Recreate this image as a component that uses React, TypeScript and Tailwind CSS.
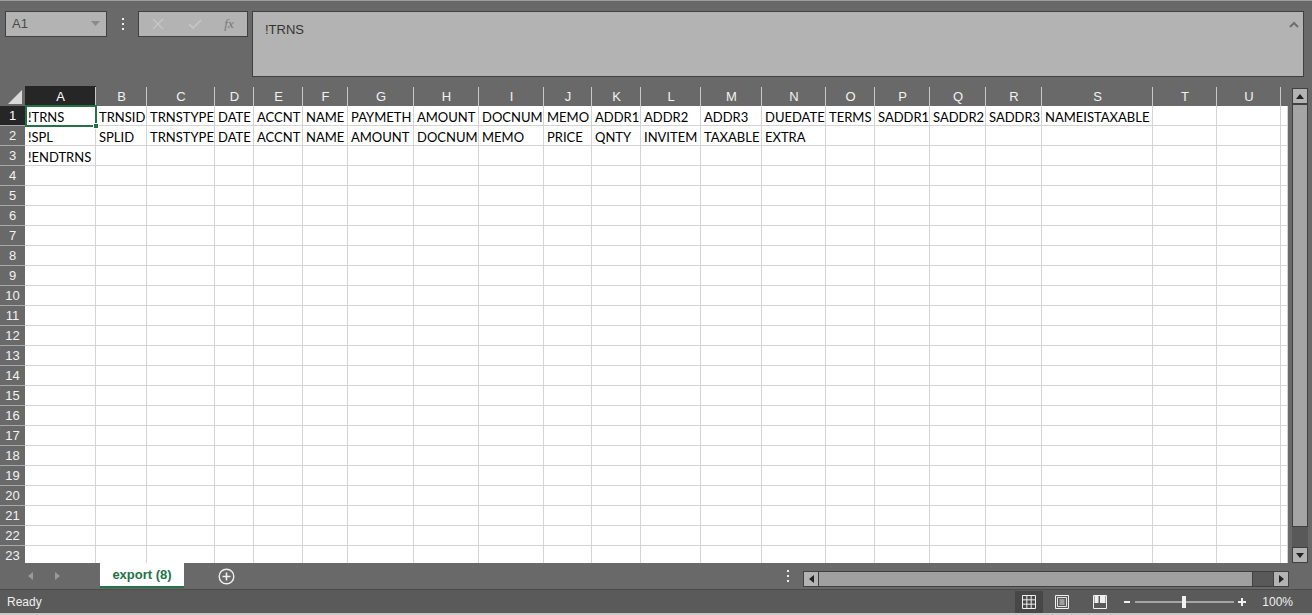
import React from 'react';

const COLS: [string, number][] = [
  ['A', 71], ['B', 51], ['C', 68], ['D', 39], ['E', 49], ['F', 45], ['G', 66],
  ['H', 65], ['I', 65], ['J', 48], ['K', 49], ['L', 60], ['M', 61], ['N', 64],
  ['O', 49], ['P', 55], ['Q', 56], ['R', 56], ['S', 111], ['T', 64], ['U', 64], ['', 7],
];

const DATA: string[][] = [
  ['!TRNS', 'TRNSID', 'TRNSTYPE', 'DATE', 'ACCNT', 'NAME', 'PAYMETH', 'AMOUNT', 'DOCNUM', 'MEMO', 'ADDR1', 'ADDR2', 'ADDR3', 'DUEDATE', 'TERMS', 'SADDR1', 'SADDR2', 'SADDR3', 'NAMEISTAXABLE'],
  ['!SPL', 'SPLID', 'TRNSTYPE', 'DATE', 'ACCNT', 'NAME', 'AMOUNT', 'DOCNUM', 'MEMO', 'PRICE', 'QNTY', 'INVITEM', 'TAXABLE', 'EXTRA'],
  ['!ENDTRNS'],
];

const ROWS = Array.from({ length: 23 }, (_, i) => i + 1);

function FormulaArea() {
  return (
    <div className="h-[85px] bg-[#696969] flex items-start pt-[10px] pl-[5px] pr-[8px]">
      {/* name box */}
      <div className="w-[102px] h-[26px] bg-[#b3b3b3] border border-[#404040] flex items-center justify-between pl-[6px] pr-[6px]">
        <span className="text-[13px] text-[#4a4a4a]">A1</span>
        <svg width="9" height="6" viewBox="0 0 9 6"><polygon points="0,0 9,0 4.5,5" fill="#8a8a8a" /></svg>
      </div>
      <div className="w-[31px] h-[26px] flex items-center justify-center">
        <svg width="4" height="14" viewBox="0 0 4 14">
          <rect x="1" y="1" width="2" height="2" fill="#eee" />
          <rect x="1" y="6" width="2" height="2" fill="#eee" />
          <rect x="1" y="11" width="2" height="2" fill="#eee" />
        </svg>
      </div>
      {/* cancel / enter / fx */}
      <div className="w-[110px] h-[26px] bg-[#b3b3b3] border border-[#404040] flex items-center">
        <div className="w-[37px] flex justify-center">
          <svg width="12" height="12" viewBox="0 0 12 12"><path d="M1 1 L11 11 M11 1 L1 11" stroke="#c6c6c6" strokeWidth="1.4" /></svg>
        </div>
        <div className="w-[37px] flex justify-center">
          <svg width="14" height="12" viewBox="0 0 14 12"><path d="M1 6 L5 10 L13 2" stroke="#c6c6c6" strokeWidth="1.6" fill="none" /></svg>
        </div>
        <div className="w-[32px] flex justify-center">
          <span className="italic text-[13px] text-[#777] font-['Liberation_Serif',serif]">fx</span>
        </div>
      </div>
      <div className="w-[4px]" />
      {/* formula input */}
      <div className="flex-1 h-[66px] bg-[#b3b3b3] border border-[#404040] relative pl-[12px] pt-[5px]">
        <span className="text-[13px] text-[#333]">!TRNS</span>
        <svg className="absolute right-[4px] top-[9px]" width="10" height="7" viewBox="0 0 10 7">
          <path d="M1 6 L5 2 L9 6" stroke="#6e6e6e" strokeWidth="2" fill="none" />
        </svg>
      </div>
    </div>
  );
}

function Grid() {
  const template = 'grid-cols-[25px_71px_51px_68px_39px_49px_45px_66px_65px_65px_48px_49px_60px_61px_64px_49px_55px_56px_56px_111px_64px_64px_7px]';
  return (
    <div className="h-[477px] flex bg-[#696969] overflow-hidden">
      <div className="w-[1288px] h-[477px] overflow-hidden relative">
        <div className={`grid ${template} auto-rows-[20px]`}>
          {/* header row */}
          <div className="h-[20px] flex items-end justify-end pr-[3px] pb-[2px]">
            <svg width="14" height="14" viewBox="0 0 14 14"><polygon points="14,0 14,14 0,14" fill="#dadada" /></svg>
          </div>
          {COLS.map(([c], i) => (
            <div
              key={c + i}
              className={`h-[20px] flex items-center justify-center pt-[1px] text-[13px] relative ${c === 'A' ? 'bg-[#262626] text-white' : 'text-[#f2f2f2]'}`}
            >
              {c}
              {i < COLS.length - 1 && <div className="absolute right-0 top-[1px] bottom-0 w-px bg-[#c8c8c8]" />}
            </div>
          ))}
          {ROWS.map((r) => (
            <React.Fragment key={r}>
              <div
                className={`h-[20px] flex items-center justify-center pt-[1px] text-[13px] border-b border-[#a8a8a8] ${r === 1 ? 'bg-[#262626] text-white' : 'text-[#f2f2f2]'}`}
              >
                {r}
              </div>
              {COLS.map(([c], i) => (
                <div
                  key={c + i}
                  className="h-[20px] bg-white border-r border-b border-[#d4d4d4] overflow-hidden whitespace-nowrap font-['Lato',sans-serif] text-[13px] text-black leading-[19px] pt-[2px] pl-[3px]"
                >
                  {DATA[r - 1]?.[i] ?? ''}
                </div>
              ))}
            </React.Fragment>
          ))}
        </div>
        {/* active cell */}
        <div className="absolute left-[25px] top-[19px] w-[72px] h-[22px] border-2 border-[#217346] pointer-events-none" />
        <div className="absolute left-[93px] top-[37px] w-[6px] h-[6px] bg-[#217346] border border-white" />
      </div>
      {/* vertical scrollbar */}
      <div className="w-[24px] flex flex-col pl-[4px] pt-[2px]">
        <div className="w-[16px] h-[16px] bg-[#b3b3b3] border border-[#404040] flex items-center justify-center">
          <svg width="8" height="5" viewBox="0 0 8 5"><polygon points="0,5 8,5 4,0" fill="#222" /></svg>
        </div>
        <div className="w-[16px] flex-1 bg-[#595959] flex flex-col">
          <div className="h-[423px] bg-[#a5a5a5] border border-[#404040]" />
        </div>
        <div className="w-[16px] h-[16px] bg-[#b3b3b3] border border-[#404040] flex items-center justify-center">
          <svg width="8" height="5" viewBox="0 0 8 5"><polygon points="0,0 8,0 4,5" fill="#222" /></svg>
        </div>
      </div>
    </div>
  );
}

function TabBar() {
  return (
    <div className="h-[27px] bg-[#696969] flex items-start border-b border-[#4a4a4a]">
      <div className="w-[100px] h-[26px] flex items-center">
        <div className="w-[27px] ml-[17px] flex justify-center">
          <svg width="5" height="8" viewBox="0 0 5 8"><polygon points="5,0 5,8 0,4" fill="#9a9a9a" /></svg>
        </div>
        <div className="w-[27px] flex justify-center">
          <svg width="5" height="8" viewBox="0 0 5 8"><polygon points="0,0 0,8 5,4" fill="#9a9a9a" /></svg>
        </div>
      </div>
      <div className="w-[84px] h-[25px] bg-white border-b-2 border-[#217346] flex items-center justify-center">
        <span className="text-[13px] font-bold text-[#217346]">export (8)</span>
      </div>
      <div className="w-[84px] h-[26px] flex items-center justify-center">
        <svg width="17" height="17" viewBox="0 0 17 17">
          <circle cx="8.5" cy="8.5" r="7.3" stroke="#f0f0f0" strokeWidth="1.4" fill="none" />
          <path d="M8.5 4.5 V12.5 M4.5 8.5 H12.5" stroke="#f0f0f0" strokeWidth="1.6" />
        </svg>
      </div>
      <div className="flex-1" />
      <div className="w-[30px] h-[26px] flex items-center justify-center">
        <svg width="4" height="12" viewBox="0 0 4 12">
          <rect x="1" y="0" width="2" height="2" fill="#eee" />
          <rect x="1" y="5" width="2" height="2" fill="#eee" />
          <rect x="1" y="10" width="2" height="2" fill="#eee" />
        </svg>
      </div>
      {/* horizontal scrollbar */}
      <div className="w-[486px] h-[16px] mt-[8px] flex border border-[#404040] bg-[#595959]">
        <div className="w-[15px] h-full bg-[#b3b3b3] border-r border-[#404040] flex items-center justify-center">
          <svg width="5" height="8" viewBox="0 0 5 8"><polygon points="5,0 5,8 0,4" fill="#222" /></svg>
        </div>
        <div className="w-[434px] h-full bg-[#a0a0a0] border-r border-[#404040]" />
        <div className="flex-1" />
        <div className="w-[15px] h-full bg-[#b3b3b3] border-l border-[#404040] flex items-center justify-center">
          <svg width="5" height="8" viewBox="0 0 5 8"><polygon points="0,0 0,8 5,4" fill="#222" /></svg>
        </div>
      </div>
      <div className="w-[23px]" />
    </div>
  );
}

function StatusBar() {
  return (
    <div className="h-[23px] bg-[#5a5a5a] flex items-center border-b-2 border-[#c8c8c8] box-content">
      <span className="ml-[7px] text-[12px] text-[#f0f0f0]">Ready</span>
      <div className="flex-1" />
      <div className="w-[28px] h-[22px] mt-[1px] bg-[#474747] flex items-center justify-center">
        <svg width="14" height="14" viewBox="0 0 14 14">
          <path d="M0.5 0.5 H13.5 V13.5 H0.5 Z M4.83 0.5 V13.5 M9.17 0.5 V13.5 M0.5 4.83 H13.5 M0.5 9.17 H13.5" stroke="#f0f0f0" fill="none" />
        </svg>
      </div>
      <div className="ml-[12px] flex">
        <svg width="14" height="14" viewBox="0 0 14 14">
          <path d="M0.5 0.5 H13.5 V13.5 H0.5 Z" stroke="#f0f0f0" fill="none" />
          <path d="M2.5 2.5 H11.5 V11.5 H2.5 Z M4.5 5 H9.5 M4.5 7 H9.5 M4.5 9 H9.5" stroke="#f0f0f0" fill="none" strokeWidth="0.9" />
        </svg>
      </div>
      <div className="ml-[24px] flex">
        <svg width="14" height="14" viewBox="0 0 14 14">
          <path d="M0.5 0.5 H13.5 V13.5 H0.5 Z" stroke="#f0f0f0" fill="none" />
          <rect x="1.5" y="1" width="4" height="7" fill="#f0f0f0" />
          <rect x="7" y="1" width="5.5" height="7" fill="#f0f0f0" />
        </svg>
      </div>
      <svg className="ml-[17px]" width="122" height="14" viewBox="0 0 122 14">
        <rect x="0" y="6" width="6" height="2" fill="#f0f0f0" />
        <rect x="11" y="6.5" width="99" height="1" fill="#f0f0f0" />
        <rect x="58" y="1" width="4" height="12" fill="#f0f0f0" />
        <path d="M114 7 H122 M118 3 V11" stroke="#f0f0f0" strokeWidth="2" />
      </svg>
      <span className="ml-[16px] mr-[19px] text-[12px] text-[#f0f0f0]">100%</span>
    </div>
  );
}

export default function App() {
  return (
    <div className="w-[1312px] h-[615px] overflow-hidden bg-[#696969] font-['Liberation_Sans',Arial,sans-serif] select-none">
      <div className="h-px bg-[#a0a0a0]" />
      <FormulaArea />
      <Grid />
      <TabBar />
      <StatusBar />
    </div>
  );
}
